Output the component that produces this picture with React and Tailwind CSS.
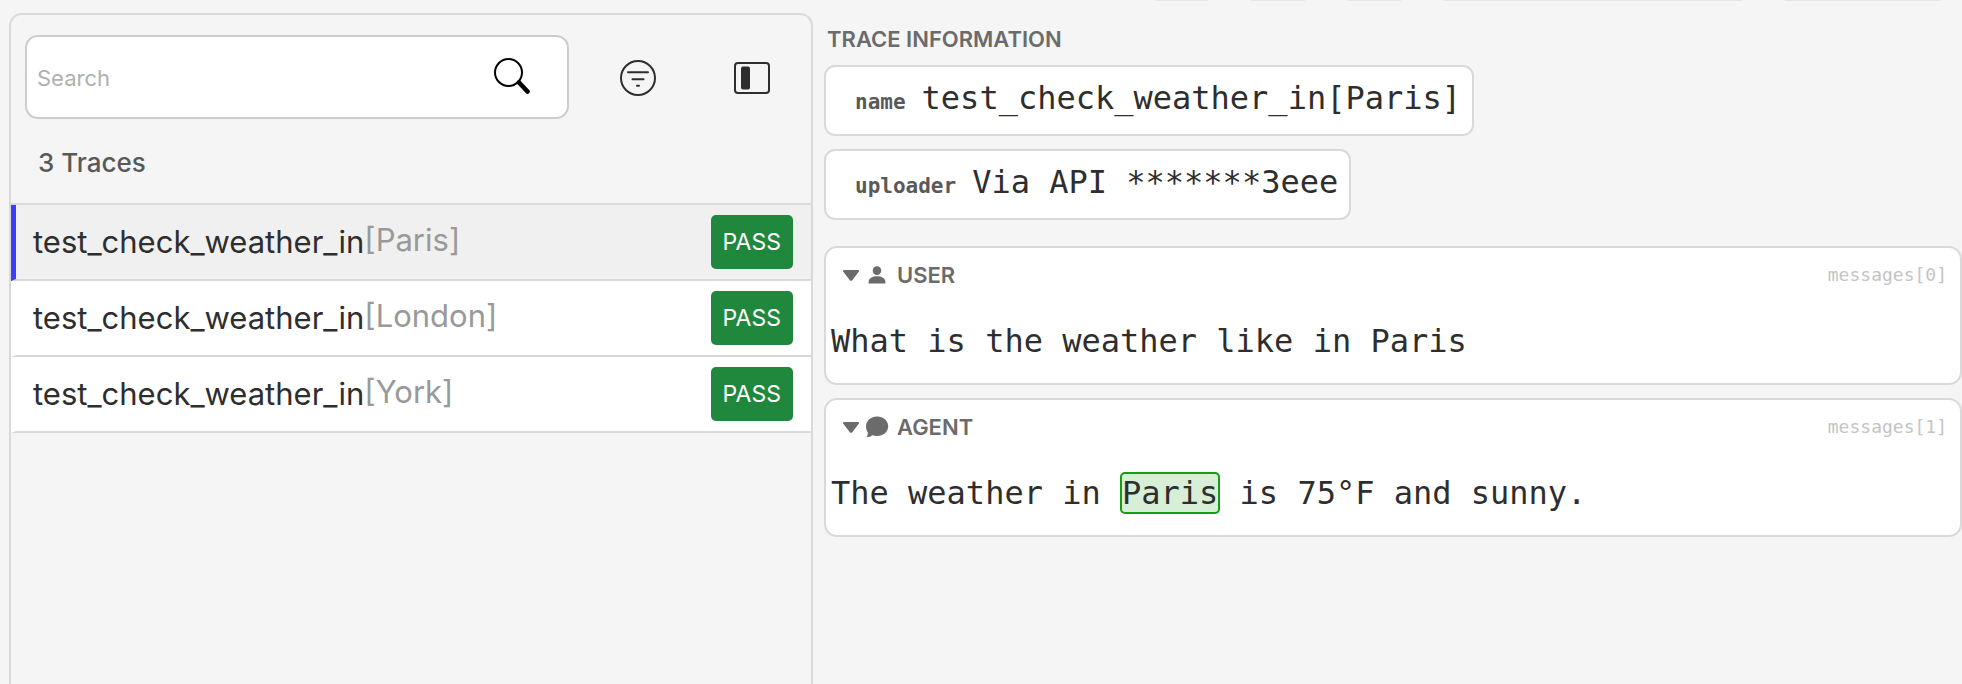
import React from "react";

const traces = [
  { name: "test_check_weather_in", param: "[Paris]", status: "PASS", active: true },
  { name: "test_check_weather_in", param: "[London]", status: "PASS" },
  { name: "test_check_weather_in", param: "[York]", status: "PASS" },
];

const SearchIcon = () => (
  <svg width="36" height="36" viewBox="0 0 36 36" fill="none" stroke="#000" aria-hidden="true">
    <circle cx="14.5" cy="14.5" r="13.5" strokeWidth="2" />
    <path d="M25 24.5 33.5 33.5" strokeWidth="4.6" strokeLinecap="round" />
  </svg>
);

const FilterIcon = () => (
  <svg width="36" height="36" viewBox="0 0 36 36" fill="none" stroke="#2e2e2e" strokeWidth="2" strokeLinecap="round" aria-hidden="true">
    <circle cx="18" cy="18" r="17" />
    <path d="M8 12.200h20M12.500 19.200h11M17 25.800h2" />
  </svg>
);

const PanelIcon = () => (
  <svg width="36" height="32" viewBox="0 0 36 32" aria-hidden="true">
    <rect x="1" y="1" width="34" height="30" rx="3" fill="none" stroke="#2e2e2e" strokeWidth="2" />
    <rect x="7" y="4.5" width="9" height="23" rx="2" fill="#2e2e2e" />
  </svg>
);

const CaretIcon = () => (
  <svg width="16" height="11" viewBox="0 0 16 11" fill="#6b6b6b" aria-hidden="true">
    <path d="M1.100 0H14.900C15.900 0 16.300 1.100 15.700 1.800L9.200 10.200C8.600 11 7.400 11 6.800 10.200L.3 1.800C-.3 1.100 .1 0 1.100 0Z" />
  </svg>
);

const UserIcon = () => (
  <svg width="24" height="24" viewBox="0 0 24 24" fill="#6b6b6b" aria-hidden="true">
    <circle cx="12" cy="7.6" r="4.3" />
    <path d="M3.600 20.500v-1.300c0-4 4-5.900 8.400-5.900s8.400 1.900 8.400 5.900v1.300Z" />
  </svg>
);

const ChatIcon = () => (
  <svg width="24" height="24" viewBox="0 0 24 24" fill="#6b6b6b" aria-hidden="true">
    <path d="M12.200 1.500C18.400 1.500 23.200 5.800 23.200 11.300S18.400 21 12.200 21c-1.700 0-3.200-.3-4.600-.8-1.700 1.200-3.700 1.900-6 1.900 .9-1.200 1.300-2.600 1.200-4.700C1.600 15.700 1 13.600 1 11.300 1 5.800 6 1.500 12.200 1.500Z" />
  </svg>
);

function TraceRow({ trace }) {
  return (
    <li>
      <a
        href="#"
        className={
          "flex h-[76px] items-center border-b-2 border-l-[5px] border-b-[#d9d9d9] pr-[18px] pl-[17px] " +
          (trace.active ? "border-l-[#3d3dfa] bg-[#f0f0f0]" : "border-l-transparent bg-white")
        }
      >
        <span className="text-[31px] leading-10 text-[#2e2e2e]">{trace.name}</span>
        <span className="pb-1 text-[31px] leading-10 text-[#999]">{trace.param}</span>
        <span className="ml-auto rounded-[5px] bg-[#1f883d] px-3 py-3 text-[23px] leading-[30px] text-white">
          {trace.status}
        </span>
      </a>
    </li>
  );
}

function InfoCard({ label, value }) {
  return (
    <div className="flex h-[71px] items-baseline gap-4 rounded-[11px] border-2 border-[#d9d9d9] bg-white pt-[11px] pr-[11px] pl-[29px] font-['DejaVu_Sans_Mono',monospace]">
      <dt className="text-[21px] leading-10 font-bold text-[#595959]">{label}</dt>
      <dd className="text-[32px] leading-10 text-[#2e2e2e]">{value}</dd>
    </div>
  );
}

function Message({ icon, role, path, children }) {
  return (
    <article className="h-[139px] rounded-[13px] border-2 border-[#d9d9d9] bg-white">
      <header className="flex h-[54px] items-center pr-[13px] pl-[17px]">
        <button type="button" aria-label="Toggle message" className="mr-[6px]">
          <CaretIcon />
        </button>
        {icon}
        <h3 className="ml-2 text-[22px] leading-7 font-semibold text-[#6b6b6b]">{role}</h3>
        <span className="ml-auto font-['DejaVu_Sans_Mono',monospace] text-[18px] leading-7 text-[#c4c4c4]">{path}</span>
      </header>
      <p className="mt-[19px] pl-[5px] font-['DejaVu_Sans_Mono',monospace] text-[32px] leading-10 text-[#2e2e2e]">
        {children}
      </p>
    </article>
  );
}

export default function App() {
  return (
    <div className="flex min-h-screen bg-[#f5f5f5] pl-[9px] font-['Inter',sans-serif]">
      <aside className="mt-[13px] w-[804px] shrink-0 rounded-t-[13px] border-2 border-b-0 border-[#d9d9d9]">
        <div className="flex items-center pt-5 pr-[2px] pl-[14px]">
          <div className="flex h-[84px] min-w-0 flex-1 items-center rounded-[13px] border-2 border-[#ccc] bg-white pr-[37px]">
            <input
              type="text"
              aria-label="Search"
              placeholder="Search"
              className="h-full min-w-0 flex-1 bg-transparent pt-[2px] pl-[10px] text-[22px] outline-none placeholder:text-[#b0b0b0]"
            />
            <button type="button" aria-label="Run search" className="pb-[2px]">
              <SearchIcon />
            </button>
          </div>
          <button type="button" aria-label="Filter" className="ml-3 flex w-[114px] justify-center pt-[2px]">
            <FilterIcon />
          </button>
          <button type="button" aria-label="Toggle sidebar" className="flex w-[114px] justify-center pt-[2px]">
            <PanelIcon />
          </button>
        </div>
        <h2 className="flex h-[86px] items-center border-b-2 border-[#d9d9d9] pt-[3px] pl-[27px] text-[26px] leading-8 font-medium text-[#595959]">
          3 Traces
        </h2>
        <ul>
          {traces.map((t) => (
            <TraceRow key={t.param} trace={t} />
          ))}
        </ul>
      </aside>

      <main className="ml-[11px] min-w-0 flex-1">
        <div className="flex h-px justify-end gap-[43px] pr-[22px]">
          <div className="w-[52px] bg-[#e5e5e5]" />
          <div className="w-[54px] bg-[#e5e5e5]" />
          <div className="w-[53px] bg-[#e5e5e5]" />
          <div className="w-[298px] bg-[#e5e5e5]" />
          <div className="w-[155px] bg-[#e5e5e5]" />
        </div>
        <h2 className="pt-6 pb-3 pl-[3px] text-[22px] leading-7 font-semibold text-[#6b6b6b]">TRACE INFORMATION</h2>
        <dl className="flex flex-col items-start gap-[13px]">
          <InfoCard label="name" value="test_check_weather_in[Paris]" />
          <InfoCard label="uploader" value="Via API *******3eee" />
        </dl>
        <div className="mt-[26px] flex flex-col gap-[13px]">
          <Message icon={<UserIcon />} role="USER" path="messages[0]">
            What is the weather like in Paris
          </Message>
          <Message icon={<ChatIcon />} role="AGENT" path="messages[1]">
            The weather in{" "}
            <mark className="rounded-[5px] border-2 border-[#12a012] bg-[#d7eed7] text-[#2e2e2e]">Paris</mark>
            {" "}is 75°F and sunny.
          </Message>
        </div>
      </main>
    </div>
  );
}
